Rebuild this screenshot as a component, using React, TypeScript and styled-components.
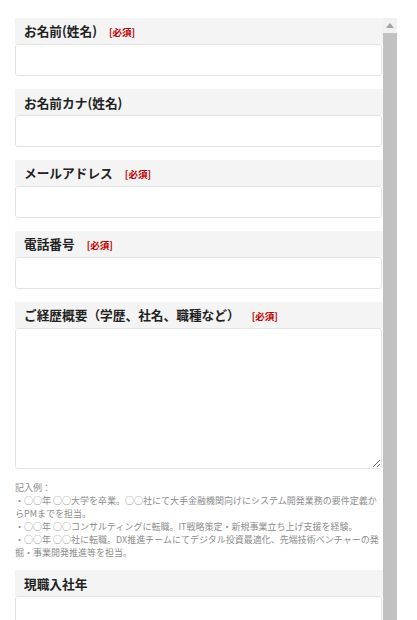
import React from 'react'
import styled, { createGlobalStyle } from 'styled-components'

const GlobalStyle = createGlobalStyle`
  body {
    margin: 0;
    background: #ffffff;
    font-family: 'Noto Sans CJK JP', 'Noto Sans', sans-serif;
  }
`

interface FieldProps {
  label: string
  required?: boolean
  multiline?: boolean
  note?: React.ReactNode
}

const Field: React.FC<FieldProps> = ({ label, required, multiline, note }) => {
  return (
    <Section>
      <Header>
        <Title>
          <Label>{label}</Label>
          {required && <Required>[必須]</Required>}
        </Title>
      </Header>
      {multiline ? <TextArea /> : <Input type='text' />}
      {note && <Note>{note}</Note>}
    </Section>
  )
}

const App: React.FC = () => {
  return (
    <>
      <GlobalStyle />
      <Frame>
        <Content>
          <Field label='お名前(姓名)' required />
          <Field label='お名前カナ(姓名)' />
          <Field label='メールアドレス' required />
          <Field label='電話番号' required />
          <Field
            label='ご経歴概要（学歴、社名、職種など）'
            required
            multiline
            note={
              <>
                記入例：
                <br />
                ・○○年 ○○大学を卒業。○○社にて大手金融機関向けにシステム開発業務の要件定義からPMまでを担当。
                <br />
                ・○○年 ○○コンサルティングに転職。IT戦略策定・新規事業立ち上げ支援を経験。
                <br />
                ・○○年 ○○社に転職。DX推進チームにてデジタル投資最適化、先端技術ベンチャーの発掘・事業開発推進等を担当。
              </>
            }
          />
          <Field label='現職入社年' />
        </Content>
        <ScrollBar>
          <ArrowButton>
            <svg width='8' height='5' viewBox='0 0 8 5'>
              <polygon points='4,0 8,5 0,5' fill='#a3a3a3' />
            </svg>
          </ArrowButton>
          <Thumb />
        </ScrollBar>
      </Frame>
    </>
  )
}

export default App

const Frame = styled.div`
  display: flex;
  width: 382px;
  height: 602px;
  margin: 18px 0 0 15px;
  overflow: hidden;
`

const Content = styled.div`
  width: 368px;
  display: flex;
  flex-direction: column;
  flex-shrink: 0;
`

const Section = styled.div`
  display: flex;
  flex-direction: column;
  margin-bottom: 13px;
`

const Header = styled.div`
  height: 26px;
  display: flex;
  align-items: center;
  padding-left: 9px;
  background: #f4f4f4;
`

const Title = styled.div`
  display: flex;
  align-items: baseline;
  margin-top: 1px;
`

const Label = styled.span`
  font-size: 12.7px;
  font-weight: 700;
  color: #222222;
  line-height: 16px;
`

const Required = styled.span`
  margin-left: 12px;
  font-size: 9.5px;
  font-weight: 700;
  color: #c00000;
  line-height: 16px;
`

const Input = styled.input`
  box-sizing: border-box;
  width: 367px;
  height: 32px;
  margin: 0;
  border: 1px solid #e3e3e3;
  border-radius: 3px;
  background: #ffffff;
  outline: none;
`

const TextArea = styled.textarea`
  box-sizing: border-box;
  width: 367px;
  height: 141px;
  margin: 0;
  border: 1px solid #e3e3e3;
  border-radius: 3px;
  background: #ffffff;
  outline: none;
  display: block;
`

const Note = styled.p`
  margin: 12px 0 -2px 0;
  width: 367px;
  font-size: 9px;
  line-height: 13px;
  color: #8c8c8c;
`

const ScrollBar = styled.div`
  width: 14px;
  display: flex;
  flex-direction: column;
  flex-shrink: 0;
`

const ArrowButton = styled.div`
  height: 15px;
  display: flex;
  align-items: center;
  justify-content: center;
  background: #f1f1f1;
`

const Thumb = styled.div`
  flex: 1;
  background: #c1c1c1;
`
